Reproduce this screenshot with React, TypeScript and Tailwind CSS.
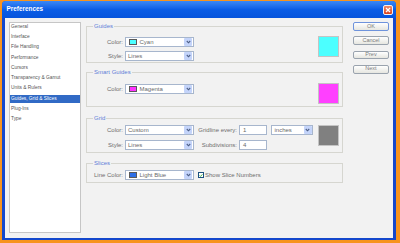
import type { ReactNode } from "react";

const pages = [
  "General",
  "Interface",
  "File Handling",
  "Performance",
  "Cursors",
  "Transparency & Gamut",
  "Units & Rulers",
  "Guides, Grid & Slices",
  "Plug-Ins",
  "Type",
];

function Chevron() {
  return (
    <svg width="5" height="4" viewBox="0 0 5 4">
      <path d="M0.8 1 L2.5 2.8 L4.2 1" fill="none" stroke="#4d5f86" strokeWidth="1.1" />
    </svg>
  );
}

function Select({
  width,
  text,
  swatch,
}: {
  width: string;
  text: string;
  swatch?: string;
}) {
  return (
    <div className={`flex h-[10px] items-center border border-[#a7b6cd] bg-white ${width}`}>
      {swatch && <span className={`ml-[3.5px] h-[6.5px] w-[8px] border border-[#5a5a5a] ${swatch}`} />}
      <span className={`flex-1 text-[6px] leading-none text-[#6a6a6a] ${swatch ? "ml-[2.5px]" : "ml-[2.5px]"}`}>
        {text}
      </span>
      <span className="mr-[0.5px] flex h-[8px] w-[8px] items-center justify-center rounded-[1px] bg-[#c4d4fa]">
        <Chevron />
      </span>
    </div>
  );
}

function Field({ width, value }: { width: string; value: string }) {
  return (
    <div className={`flex h-[10px] items-center border border-[#a7b6cd] bg-white pl-[3px] text-[6px] leading-none text-[#6a6a6a] ${width}`}>
      {value}
    </div>
  );
}

function Label({ text, width }: { text: string; width: string }) {
  return (
    <span className={`text-right text-[6px] leading-none text-[#6e6e6e] ${width}`}>{text}</span>
  );
}

function Group({
  title,
  className,
  children,
}: {
  title: string;
  className: string;
  children: ReactNode;
}) {
  return (
    <fieldset className={`border border-[#d6d6d0] ${className}`}>
      <legend className="ml-[6px] px-[1px] text-[6px] leading-[8px] text-[#5f7fd8]">{title}</legend>
      {children}
    </fieldset>
  );
}

function Swatch({ color }: { color: string }) {
  return <div className={`h-[21px] w-[21px] border border-[#c4c4c4] ${color}`} />;
}

function Button({ text, primary }: { text: string; primary?: boolean }) {
  return (
    <div
      className={`flex h-[8.7px] items-center justify-center rounded-[2px] border bg-gradient-to-b from-white to-[#e6e6e0] text-[5.5px] leading-none text-[#7c7c7c] ${
        primary ? "border-[#6e93dc]" : "border-[#9aa3ae]"
      }`}
    >
      {text}
    </div>
  );
}

export default function App() {
  return (
    <div className="h-[243px] w-[400px] bg-[#f7931e] pb-[3px] pl-[2px] pr-[4px] pt-[1px] font-['Liberation_Sans',Arial,sans-serif]">
      <div className="flex h-full flex-col rounded-t-[4px] bg-[#1448cc]">
        <div className="flex h-[17px] items-center justify-between rounded-t-[4px] bg-gradient-to-b from-[#3b88f5] via-[#0a5de6] to-[#0654dc] pl-[4.5px] pr-[3px]">
          <span className="text-[6.4px] font-bold leading-none text-white">Preferences</span>
          <div className="flex h-[10px] w-[10px] items-center justify-center rounded-[2px] border border-[#f4f4f4] bg-gradient-to-b from-[#f08a6a] to-[#d8401c]">
            <svg width="6" height="6" viewBox="0 0 6 6">
              <path d="M1 1 L5 5 M5 1 L1 5" stroke="white" strokeWidth="1.3" />
            </svg>
          </div>
        </div>

        <div className="mx-[3px] mb-[2px] flex flex-1 bg-[#f2f2f2] pb-[5px] pl-[4px] pr-[4px] pt-[4px]">
          <div className="w-[72px] border border-[#c6c6c6] bg-white">
            <div className="flex flex-col gap-[1.77px]">
              {pages.map((p) => (
                <div
                  key={p}
                  className={`flex h-[8.5px] items-center pl-[1px] text-[4.8px] leading-none ${
                    p === "Guides, Grid & Slices" ? "bg-[#316ac5] text-white" : "text-[#555]"
                  }`}
                >
                  {p}
                </div>
              ))}
            </div>
          </div>

          <div className="ml-[5px] flex w-[257px] flex-col">
            <Group title="Guides" className="pb-[1px]">
              <div className="flex items-start justify-between pr-[3px] pt-[6px]">
                <div className="mt-[1px] flex flex-col gap-[4px]">
                  <div className="flex items-center">
                    <Label text="Color:" width="w-[36px]" />
                    <div className="ml-[1.5px]">
                      <Select width="w-[69px]" text="Cyan" swatch="bg-[#4cffff]" />
                    </div>
                  </div>
                  <div className="flex items-center">
                    <Label text="Style:" width="w-[36px]" />
                    <div className="ml-[1.5px]">
                      <Select width="w-[69px]" text="Lines" />
                    </div>
                  </div>
                </div>
                <Swatch color="bg-[#4cffff]" />
              </div>
            </Group>

            <Group title="Smart Guides" className="mt-[5px] pb-[2px]">
              <div className="flex items-start justify-between pr-[3px] pt-[7px]">
                <div className="mt-[1px] flex items-center">
                  <Label text="Color:" width="w-[36px]" />
                  <div className="ml-[1.5px]">
                    <Select width="w-[69px]" text="Magenta" swatch="bg-[#ff33ff]" />
                  </div>
                </div>
                <Swatch color="bg-[#ff40ff]" />
              </div>
            </Group>

            <Group title="Grid" className="mt-[7px] pb-[2px]">
              <div className="flex items-start justify-between pr-[3px] pt-[3px]">
                <div className="flex flex-col gap-[5px]">
                  <div className="flex items-center">
                    <Label text="Color:" width="w-[36px]" />
                    <div className="ml-[1.5px]">
                      <Select width="w-[69px]" text="Custom" />
                    </div>
                    <div className="ml-[1.5px] flex">
                      <Label text="Gridline every:" width="w-[42px]" />
                    </div>
                    <div className="ml-[2px]">
                      <Field width="w-[28px]" value="1" />
                    </div>
                    <div className="ml-[4px]">
                      <Select width="w-[42px]" text="inches" />
                    </div>
                  </div>
                  <div className="flex items-center">
                    <Label text="Style:" width="w-[36px]" />
                    <div className="ml-[1.5px]">
                      <Select width="w-[69px]" text="Lines" />
                    </div>
                    <div className="ml-[1.5px] flex">
                      <Label text="Subdivisions:" width="w-[42px]" />
                    </div>
                    <div className="ml-[2px]">
                      <Field width="w-[28px]" value="4" />
                    </div>
                  </div>
                </div>
                <Swatch color="bg-[#808080]" />
              </div>
            </Group>

            <Group title="Slices" className="mt-[6px] pb-[2px]">
              <div className="flex items-center pt-[3px]">
                <Label text="Line Color:" width="w-[36px]" />
                <div className="ml-[1.5px]">
                  <Select width="w-[69px]" text="Light Blue" swatch="bg-[#2e6fe6]" />
                </div>
                <div className="ml-[4.5px] flex h-[6px] w-[6px] items-center justify-center border border-[#1c5180] bg-white">
                  <svg width="5" height="5" viewBox="0 0 5 5">
                    <path d="M0.8 2.4 L2 3.7 L4.3 1" fill="none" stroke="#21a121" strokeWidth="1" />
                  </svg>
                </div>
                <span className="ml-[1px] text-[6px] leading-none text-[#6e6e6e]">Show Slice Numbers</span>
              </div>
            </Group>
          </div>

          <div className="ml-[10px] flex w-[36px] flex-col gap-[5.5px] pt-[0.3px]">
            <Button text="OK" primary />
            <Button text="Cancel" />
            <Button text="Prev" />
            <Button text="Next" />
          </div>
        </div>
      </div>
    </div>
  );
}
